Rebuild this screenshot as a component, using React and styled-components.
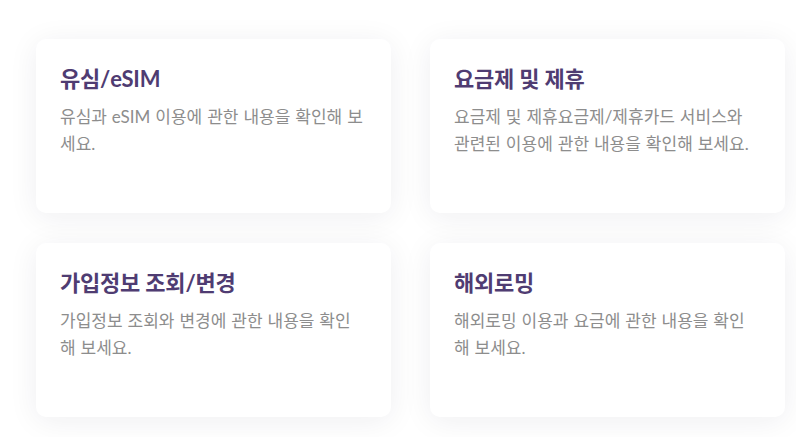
import React from "react";
import styled, { createGlobalStyle } from "styled-components";

const Global = createGlobalStyle`
  html, body { margin: 0; padding: 0; background: #ffffff; }
  body { font-family: "Lato", "Noto Sans CJK KR", sans-serif; }
`;

const Page = styled.div`
  padding: 39px 0 0 36px;
  width: 796px;
  height: 437px;
  box-sizing: border-box;
  overflow: hidden;
`;

const Grid = styled.div`
  display: grid;
  grid-template-columns: 355px 355px;
  column-gap: 39px;
  row-gap: 30px;
`;

const Card = styled.div`
  box-sizing: border-box;
  height: 174px;
  padding: 24px 26px 24px 24px;
  background: #ffffff;
  border-radius: 10px;
  box-shadow: 0 4px 30px rgba(30, 30, 60, 0.07);
`;

const Title = styled.h3`
  margin: 0;
  font-size: 22px;
  font-weight: 700;
  line-height: 32px;
  color: #4f3c72;
  letter-spacing: -0.2px;
`;

const Desc = styled.p`
  margin: 8px 0 0;
  font-size: 17px;
  line-height: 27px;
  word-spacing: 0.6px;
  color: #8d8d8d;
  font-weight: 400;
`;

const items = [
  { title: "유심/eSIM", desc: "유심과 eSIM 이용에 관한 내용을 확인해 보세요." },
  { title: "요금제 및 제휴", desc: "요금제 및 제휴요금제/제휴카드 서비스와 관련된 이용에 관한 내용을 확인해 보세요." },
  { title: "가입정보 조회/변경", desc: "가입정보 조회와 변경에 관한 내용을 확인해 보세요." },
  { title: "해외로밍", desc: "해외로밍 이용과 요금에 관한 내용을 확인해 보세요." },
];

export default function App() {
  return (
    <>
      <Global />
      <Page>
        <Grid>
          {items.map((it) => (
            <Card key={it.title}>
              <Title>{it.title}</Title>
              <Desc>{it.desc}</Desc>
            </Card>
          ))}
        </Grid>
      </Page>
    </>
  );
}
